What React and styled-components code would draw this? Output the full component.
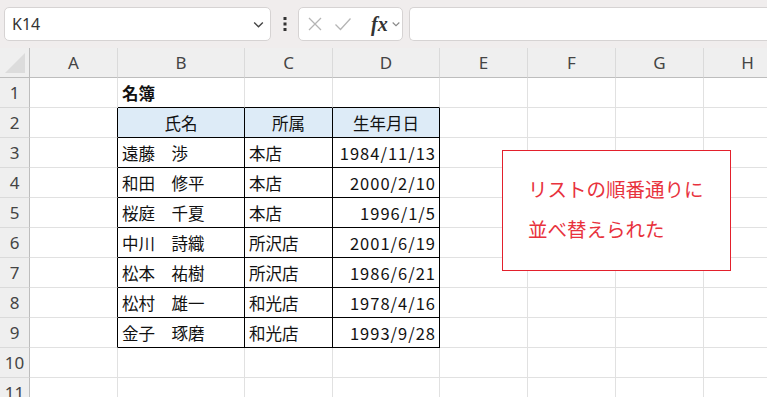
import React from 'react'
import styled, { createGlobalStyle } from 'styled-components'

const GlobalStyle = createGlobalStyle`
  body {
    margin: 0;
    background: #ffffff;
    font-family: 'Noto Sans CJK JP', 'Noto Sans', sans-serif;
    overflow: hidden;
  }
`

const COLS = [
  { key: 'A', width: 88 },
  { key: 'B', width: 127 },
  { key: 'C', width: 88 },
  { key: 'D', width: 107 },
  { key: 'E', width: 88 },
  { key: 'F', width: 88 },
  { key: 'G', width: 88 },
  { key: 'H', width: 88 },
]

const ROWS = 11

const people = [
  ['遠藤　渉', '本店', '1984/11/13'],
  ['和田　修平', '本店', '2000/2/10'],
  ['桜庭　千夏', '本店', '1996/1/5'],
  ['中川　詩織', '所沢店', '2001/6/19'],
  ['松本　祐樹', '所沢店', '1986/6/21'],
  ['松村　雄一', '和光店', '1978/4/16'],
  ['金子　琢磨', '和光店', '1993/9/28'],
]

// table occupies B2:D9 (col index 1..3, row 2..9)
const inTable = (c, r) => c >= 1 && c <= 3 && r >= 2 && r <= 9

const Page = styled.div`
  width: 767px;
  height: 397px;
  overflow: hidden;
  display: flex;
  flex-direction: column;
`

const Toolbar = styled.div`
  height: 48px;
  flex-shrink: 0;
  background: #f0eded;
  display: flex;
  align-items: center;
  padding-left: 4px;
  box-sizing: border-box;
`

const NameBox = styled.div`
  width: 267px;
  height: 34px;
  box-sizing: border-box;
  background: #fff;
  border: 1px solid #d6d3d3;
  border-radius: 5px;
  display: flex;
  align-items: center;
  justify-content: space-between;
  padding: 0 5px 0 7px;
  font-family: 'Noto Sans', sans-serif;
  font-size: 16px;
  color: #333;
`

const Kebab = styled.div`
  width: 27px;
  display: flex;
  justify-content: center;
`

const FormulaButtons = styled.div`
  width: 105px;
  height: 34px;
  box-sizing: border-box;
  background: #fff;
  border: 1px solid #d6d3d3;
  border-radius: 5px;
  display: flex;
  align-items: center;
  padding-left: 8px;
  gap: 11px;
`

const Fx = styled.span`
  font-family: 'Liberation Serif', serif;
  font-style: italic;
  font-weight: bold;
  font-size: 20px;
  color: #333;
  margin-left: 8px;
  display: flex;
  align-items: center;
  gap: 3px;
`

const FormulaBar = styled.div`
  flex: 1;
  height: 34px;
  margin-left: 6px;
  box-sizing: border-box;
  background: #fff;
  border: 1px solid #d6d3d3;
  border-right: none;
  border-radius: 5px 0 0 5px;
`

const SheetArea = styled.div`
  position: relative;
  flex: 1;
`

const Grid = styled.div`
  display: grid;
  grid-template-columns: 30px ${COLS.map(c => c.width + 'px').join(' ')};
  grid-template-rows: repeat(${ROWS + 1}, 30px);
`

const Corner = styled.div`
  background: #efefef;
  border-right: 1px solid #bdbdbd;
  border-bottom: 1px solid #bdbdbd;
  position: relative;
  box-sizing: border-box;
  &::after {
    content: '';
    position: absolute;
    right: 4px;
    bottom: 4px;
    border-style: solid;
    border-width: 0 0 20px 20px;
    border-color: transparent transparent #dcdcdc transparent;
  }
`

const ColHead = styled.div`
  background: #efefef;
  border-right: 1px solid #dadada;
  border-bottom: 1px solid #bdbdbd;
  box-sizing: border-box;
  display: flex;
  align-items: center;
  justify-content: center;
  font-family: 'Noto Sans', sans-serif;
  font-size: 17px;
  color: #444;
`

const RowHead = styled.div`
  background: #efefef;
  border-right: 1px solid #bdbdbd;
  border-bottom: 1px solid #dadada;
  box-sizing: border-box;
  display: flex;
  align-items: center;
  justify-content: center;
  font-family: 'Noto Sans', sans-serif;
  font-size: 17px;
  color: #444;
`

const Cell = styled.div`
  box-sizing: border-box;
  border-right: 1px solid ${p => (p.$rightDark ? '#000' : '#e1e1e1')};
  border-bottom: 1px solid ${p => (p.$bottomDark ? '#000' : '#e1e1e1')};
  background: ${p => (p.$head ? '#ddebf7' : '#fff')};
  display: flex;
  align-items: center;
  justify-content: ${p => p.$align || 'flex-start'};
  padding: 0 ${p => (p.$num ? 3 : 4)}px 0 4px;
  font-size: 16.5px;
  letter-spacing: ${p => (p.$num ? '1px' : '0')};
  font-weight: ${p => (p.$bold ? 'bold' : 'normal')};
  color: #111;
  white-space: pre;
`

const Note = styled.div`
  position: absolute;
  left: 502px;
  top: 102px;
  width: 229px;
  height: 121px;
  box-sizing: border-box;
  background: #fff;
  border: 1.5px solid #e3202c;
  padding: 18px 0 0 25px;
  font-size: 19.5px;
  line-height: 40px;
  color: #e8323d;
`

const Chevron = ({ size = 12, color = '#444' }) => (
  <svg width={size} height={size} viewBox="0 0 12 12">
    <path d="M2 4.2 L6 8 L10 4.2" fill="none" stroke={color} strokeWidth="1.3" />
  </svg>
)

const Dots = () => (
  <svg width="4" height="16" viewBox="0 0 4 16">
    <rect x="0.5" y="1" width="3" height="3" fill="#333" />
    <rect x="0.5" y="6.5" width="3" height="3" fill="#333" />
    <rect x="0.5" y="12" width="3" height="3" fill="#333" />
  </svg>
)

const Cross = () => (
  <svg width="16" height="16" viewBox="0 0 16 16">
    <path d="M2 2 L14 14 M14 2 L2 14" stroke="#b5b5b5" strokeWidth="1.3" fill="none" />
  </svg>
)

const Check = () => (
  <svg width="18" height="16" viewBox="0 0 18 16">
    <path d="M1.5 8.5 L6.5 13.5 L16.5 2.5" stroke="#b5b5b5" strokeWidth="1.3" fill="none" />
  </svg>
)

function cellContent(c, r) {
  if (r === 1 && c === 1) return { text: '名簿', bold: true }
  if (r === 2 && c >= 1 && c <= 3) {
    return { text: ['氏名', '所属', '生年月日'][c - 1], head: true, align: 'center' }
  }
  if (r >= 3 && r <= 9 && c >= 1 && c <= 3) {
    const row = people[r - 3]
    return { text: row[c - 1], align: c === 3 ? 'flex-end' : 'flex-start', num: c === 3 }
  }
  return { text: '' }
}

export default function App() {
  const cells = []
  for (let r = 1; r <= ROWS; r++) {
    cells.push(<RowHead key={'rh' + r}>{r}</RowHead>)
    COLS.forEach((col, c) => {
      const info = cellContent(c, r)
      cells.push(
        <Cell
          key={col.key + r}
          $rightDark={inTable(c, r) || inTable(c + 1, r)}
          $bottomDark={inTable(c, r) || inTable(c, r + 1)}
          $head={info.head}
          $bold={info.bold}
          $align={info.align}
          $num={info.num}
        >
          {info.text}
        </Cell>
      )
    })
  }

  return (
    <Page>
      <GlobalStyle />
      <Toolbar>
        <NameBox>
          <span>K14</span>
          <Chevron size={13} />
        </NameBox>
        <Kebab>
          <Dots />
        </Kebab>
        <FormulaButtons>
          <Cross />
          <Check />
          <Fx>
            fx
            <Chevron size={10} color="#888" />
          </Fx>
        </FormulaButtons>
        <FormulaBar />
      </Toolbar>
      <SheetArea>
        <Grid>
          <Corner />
          {COLS.map(col => (
            <ColHead key={col.key}>{col.key}</ColHead>
          ))}
          {cells}
        </Grid>
        <Note>
          <div>リストの順番通りに</div>
          <div>並べ替えられた</div>
        </Note>
      </SheetArea>
    </Page>
  )
}
